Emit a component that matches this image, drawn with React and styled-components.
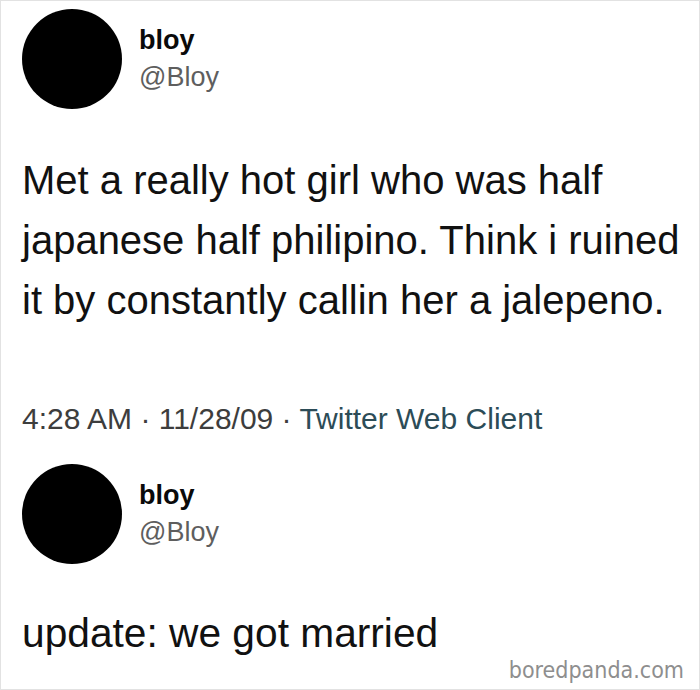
import styled, { createGlobalStyle } from 'styled-components'

const GlobalStyle = createGlobalStyle`
html, body {
	margin: 0;
	padding: 0;
	background-color: #ffffff;
}
`

const Frame = styled.div`
position: relative;
width: 700px;
height: 690px;
box-sizing: border-box;
border: 1px solid #e2e2e2;
background-color: #ffffff;
padding: 8px 0 0 21px;
font-family: "Liberation Sans", Arial, sans-serif;
color: #111111;
overflow: hidden;
`

const Header = styled.div`
display: flex;
align-items: center;
gap: 17px;
margin-top: ${props => props.$top || 0}px;
`

const Avatar = styled.div`
width: 100px;
height: 100px;
border-radius: 50%;
background-color: #000000;
flex-shrink: 0;
`

const Names = styled.div`
display: flex;
flex-direction: column;
font-size: 27px;
line-height: 37px;
`

const DisplayName = styled.span`
font-weight: bold;
color: #0a0a0a;
`

const Handle = styled.span`
color: #5e5e5e;
`

const TweetText = styled.p`
margin: ${props => props.$top}px 0 0 0;
max-width: 670px;
font-size: ${props => props.$size || 40}px;
line-height: 60px;
color: #111111;
`

const Meta = styled.div`
margin-top: 69px;
font-size: 30px;
line-height: 40px;
color: #3d3d3d;
`

const Client = styled.span`
color: #2c4c57;
`

const Watermark = styled.div`
position: absolute;
right: 15px;
bottom: 7px;
font-family: "DejaVu Sans Condensed", "DejaVu Sans", sans-serif;
font-size: 23px;
line-height: 23px;
color: #8e8e8e;
`

const App = () => {
	return (
		<>
			<GlobalStyle />
			<Frame>
				<Header>
					<Avatar />
					<Names>
						<DisplayName>bloy</DisplayName>
						<Handle>@Bloy</Handle>
					</Names>
				</Header>

				<TweetText $top={41}>
					Met a really hot girl who was half japanese half philipino. Think i ruined it by constantly callin her a jalepeno.
				</TweetText>

				<Meta>
					4:28 AM · 11/28/09 · <Client>Twitter Web Client</Client>
				</Meta>

				<Header $top={25}>
					<Avatar />
					<Names>
						<DisplayName>bloy</DisplayName>
						<Handle>@Bloy</Handle>
					</Names>
				</Header>

				<TweetText $top={39} $size={40.7}>update: we got married</TweetText>

				<Watermark>boredpanda.com</Watermark>
			</Frame>
		</>
	)
}

export default App
